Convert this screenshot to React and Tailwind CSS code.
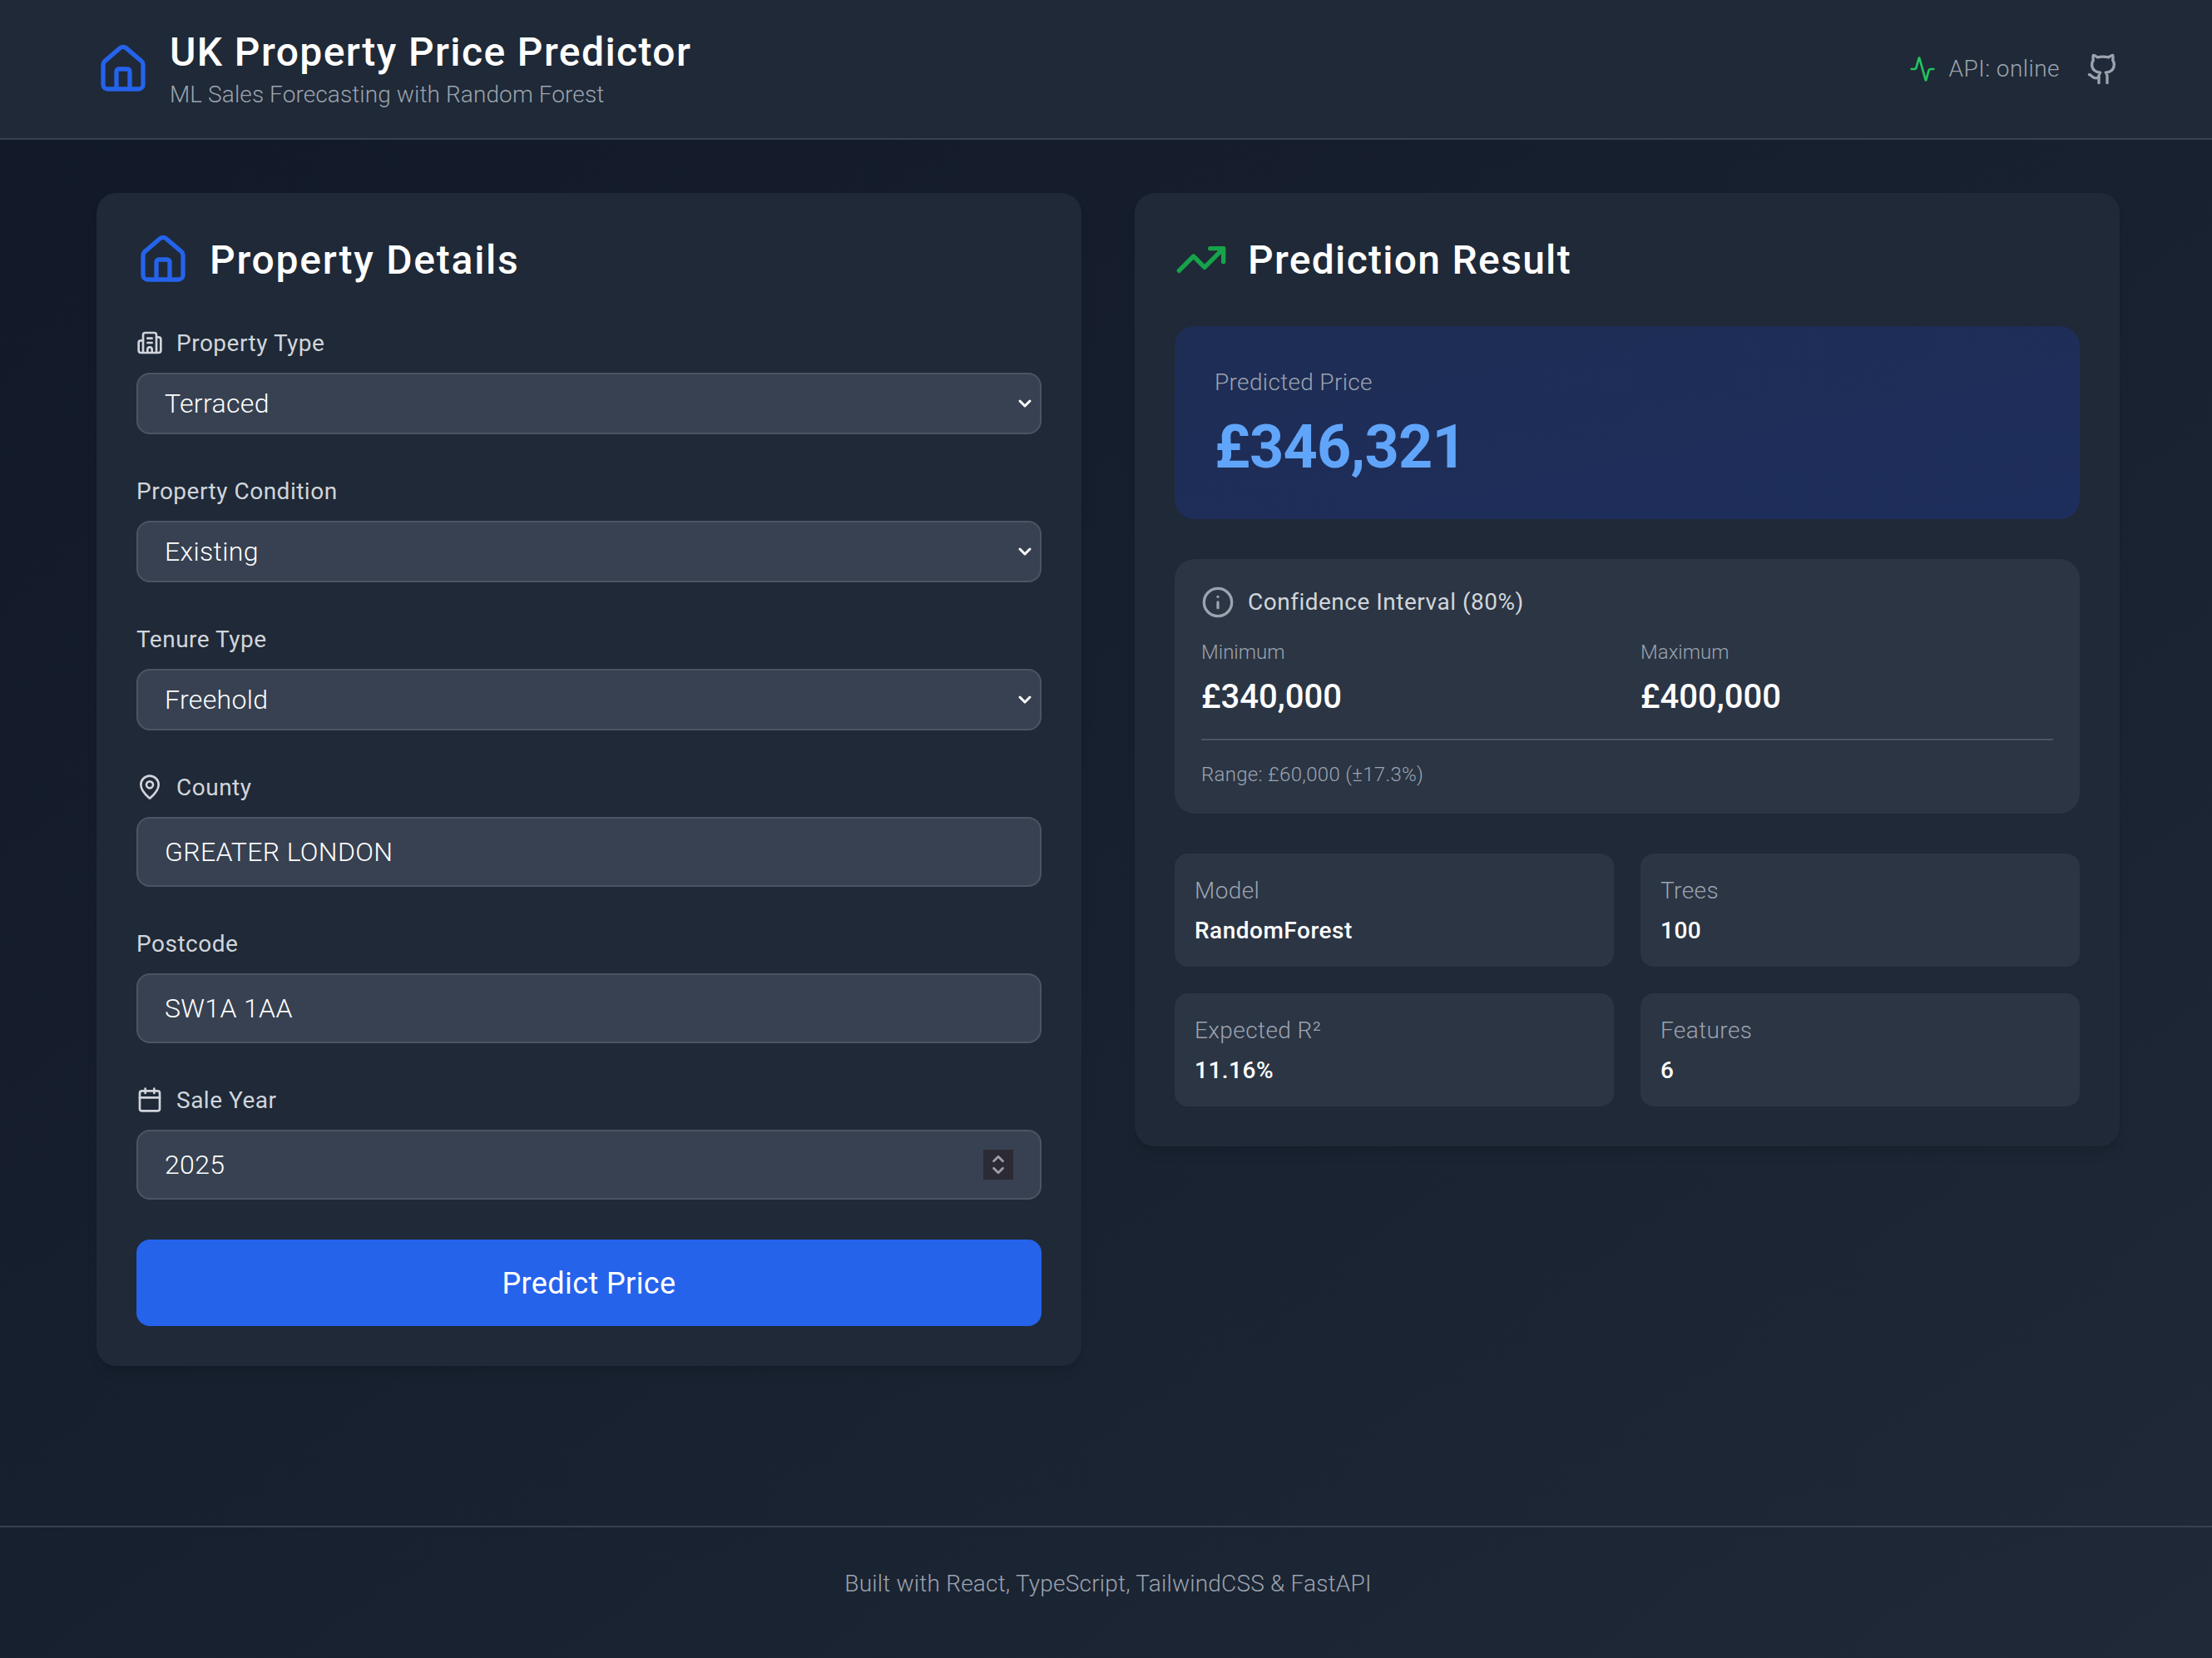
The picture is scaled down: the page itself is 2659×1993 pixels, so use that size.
import React from "react";
import { House, Building2, MapPin, Calendar, Activity, Github, TrendingUp, Info, ChevronDown, ChevronUp } from "lucide-react";

const FONT = "font-['Roboto',sans-serif]";

const Label = ({ icon: Icon, children }) => (
  <label className="flex items-center gap-[16px] h-[40px] mb-[16px] text-[28px] leading-[40px] font-normal tracking-[0.5px] text-[#d1d5db]">
    {Icon && <Icon size={32} strokeWidth={2} className="shrink-0" />}
    <span className="pt-[2px]">{children}</span>
  </label>
);

const SelectField = ({ icon, label, value, options }) => (
  <div className="mb-[48px]">
    <Label icon={icon}>{label}</Label>
    <div className="relative">
      <select
        defaultValue={value}
        className="appearance-none w-full h-[74px] px-[32px] rounded-[16px] border-2 border-[#4b5563] bg-[#374151] text-[32px] font-light tracking-[0.35px] text-white outline-none"
      >
        {options.map((o) => (
          <option key={o}>{o}</option>
        ))}
      </select>
      <ChevronDown size={24} strokeWidth={3} className="absolute right-[8px] top-[25px] text-white pointer-events-none" />
    </div>
  </div>
);

const TextField = ({ icon, label, value, spinner }) => (
  <div className="mb-[48px]">
    <Label icon={icon}>{label}</Label>
    <div className="relative">
      <input
        type="text"
        defaultValue={value}
        className="w-full h-[84px] px-[32px] rounded-[16px] border-2 border-[#4b5563] bg-[#374151] text-[32px] font-light tracking-[0.35px] text-white outline-none"
      />
      {spinner && (
        <div className="absolute right-[34px] top-[24px] w-[36px] h-[36px] bg-[#2c2a35] flex flex-col items-center justify-center text-[#a09fa8]">
          <ChevronUp size={24} strokeWidth={3} className="-mb-[4px]" />
          <ChevronDown size={24} strokeWidth={3} className="-mt-[4px]" />
        </div>
      )}
    </div>
  </div>
);

const Stat = ({ label, value }) => (
  <div className="h-[136px] px-[24px] pt-[25px] rounded-[16px] bg-[#2b3544]">
    <p className="text-[28px] leading-[40px] font-light tracking-[0.4px] text-[#9ca3af] mb-[8px]">{label}</p>
    <p className="text-[28px] leading-[40px] font-medium tracking-[0.5px] text-white">{value}</p>
  </div>
);

const App = () => {
  return (
    <div className={`${FONT} min-h-[1993px] flex flex-col bg-gradient-to-br from-[#111827] to-[#1f2937]`}>
      <header className="bg-[#1f2937] border-b-2 border-[#374151] pl-[116px] pr-[111px] py-[32px] flex items-center justify-between">
        <div className="flex items-center gap-[24px]">
          <House size={64} strokeWidth={2} className="text-[#2563eb]" />
          <div>
            <h1 className="text-[48px] leading-[62px] font-medium tracking-[1.4px] text-white">UK Property Price Predictor</h1>
            <p className="text-[28px] leading-[40px] font-light tracking-[0.1px] text-[#9ca3af]">ML Sales Forecasting with Random Forest</p>
          </div>
        </div>
        <div className="flex items-center gap-[32px]">
          <div className="flex items-center gap-[16px]">
            <Activity size={32} strokeWidth={2} className="text-[#22c55e]" />
            <span className="text-[28px] font-light tracking-[0.45px] text-[#9ca3af]">API: online</span>
          </div>
          <Github size={40} strokeWidth={2} className="text-[#9ca3af]" />
        </div>
      </header>

      <main className="pl-[116px] pr-[111px] pt-[64px] pb-[64px] grid grid-cols-2 gap-[64px] items-start">
        <section className="bg-[#1f2937] rounded-[24px] p-[48px] shadow-lg">
          <div className="flex items-center gap-[24px] h-[64px] mb-[48px]">
            <House size={64} strokeWidth={2} className="text-[#2563eb]" />
            <h2 className="pt-[2px] text-[48px] leading-[64px] font-medium tracking-[1.75px] text-white">Property Details</h2>
          </div>
          <SelectField icon={Building2} label="Property Type" value="Terraced" options={["Terraced", "Detached", "Semi-Detached", "Flat"]} />
          <SelectField label="Property Condition" value="Existing" options={["Existing", "New Build"]} />
          <SelectField label="Tenure Type" value="Freehold" options={["Freehold", "Leasehold"]} />
          <TextField icon={MapPin} label="County" value="GREATER LONDON" />
          <TextField label="Postcode" value="SW1A 1AA" />
          <TextField icon={Calendar} label="Sale Year" value="2025" spinner />
          <button className="w-full h-[104px] pt-[2px] rounded-[16px] bg-[#2563eb] text-white text-[36px] font-normal tracking-[0.4px]">Predict Price</button>
        </section>

        <section className="bg-[#1f2937] rounded-[24px] p-[48px] shadow-lg">
          <div className="flex items-center gap-[24px] h-[64px] mb-[48px]">
            <TrendingUp size={64} strokeWidth={2} className="text-[#16a34a]" />
            <h2 className="pt-[2px] text-[48px] leading-[64px] font-medium tracking-[1.3px] text-white">Prediction Result</h2>
          </div>

          <div className="h-[232px] rounded-[24px] px-[48px] pt-[48px] mb-[48px] bg-gradient-to-br from-[#1e2d54] to-[#1e2e5c]">
            <p className="text-[28px] leading-[40px] font-light tracking-[0.33px] text-[#9ca3af] mb-[18px]">Predicted Price</p>
            <p className="text-[72px] leading-[80px] font-bold tracking-[-0.8px] text-[#60a5fa]">£346,321</p>
          </div>

          <div className="h-[306px] rounded-[24px] px-[32px] pt-[32px] mb-[48px] bg-[#2b3544]">
            <div className="flex items-center gap-[16px] h-[40px] mb-[24px] text-[28px] font-normal tracking-[0.5px] text-[#d1d5db]">
              <Info size={40} strokeWidth={2} className="text-[#9ca3af]" />
              Confidence Interval (80%)
            </div>
            <div className="grid grid-cols-2 gap-[32px]">
              <div>
                <p className="text-[24px] leading-[32px] font-light text-[#9ca3af] mb-[10px]">Minimum</p>
                <p className="text-[40px] leading-[56px] font-medium text-white">£340,000</p>
              </div>
              <div>
                <p className="text-[24px] leading-[32px] font-light text-[#9ca3af] mb-[10px]">Maximum</p>
                <p className="text-[40px] leading-[56px] font-medium text-white">£400,000</p>
              </div>
            </div>
            <div className="mt-[22px] pt-[25px] border-t-2 border-[#4b5563]">
              <p className="text-[24px] leading-[32px] font-light tracking-[0.3px] text-[#9ca3af]">Range: £60,000 (±17.3%)</p>
            </div>
          </div>

          <div className="grid grid-cols-2 gap-[32px]">
            <Stat label="Model" value="RandomForest" />
            <Stat label="Trees" value="100" />
            <Stat label="Expected R²" value="11.16%" />
            <Stat label="Features" value="6" />
          </div>
        </section>
      </main>

      <footer className="mt-[128px] border-t-2 border-[#374151] py-[48px] pl-[5px] text-center">
        <p className="text-[28px] leading-[40px] font-light tracking-[0.2px] text-[#9ca3af]">Built with React, TypeScript, TailwindCSS &amp; FastAPI</p>
      </footer>
    </div>
  );
};

export default App;
